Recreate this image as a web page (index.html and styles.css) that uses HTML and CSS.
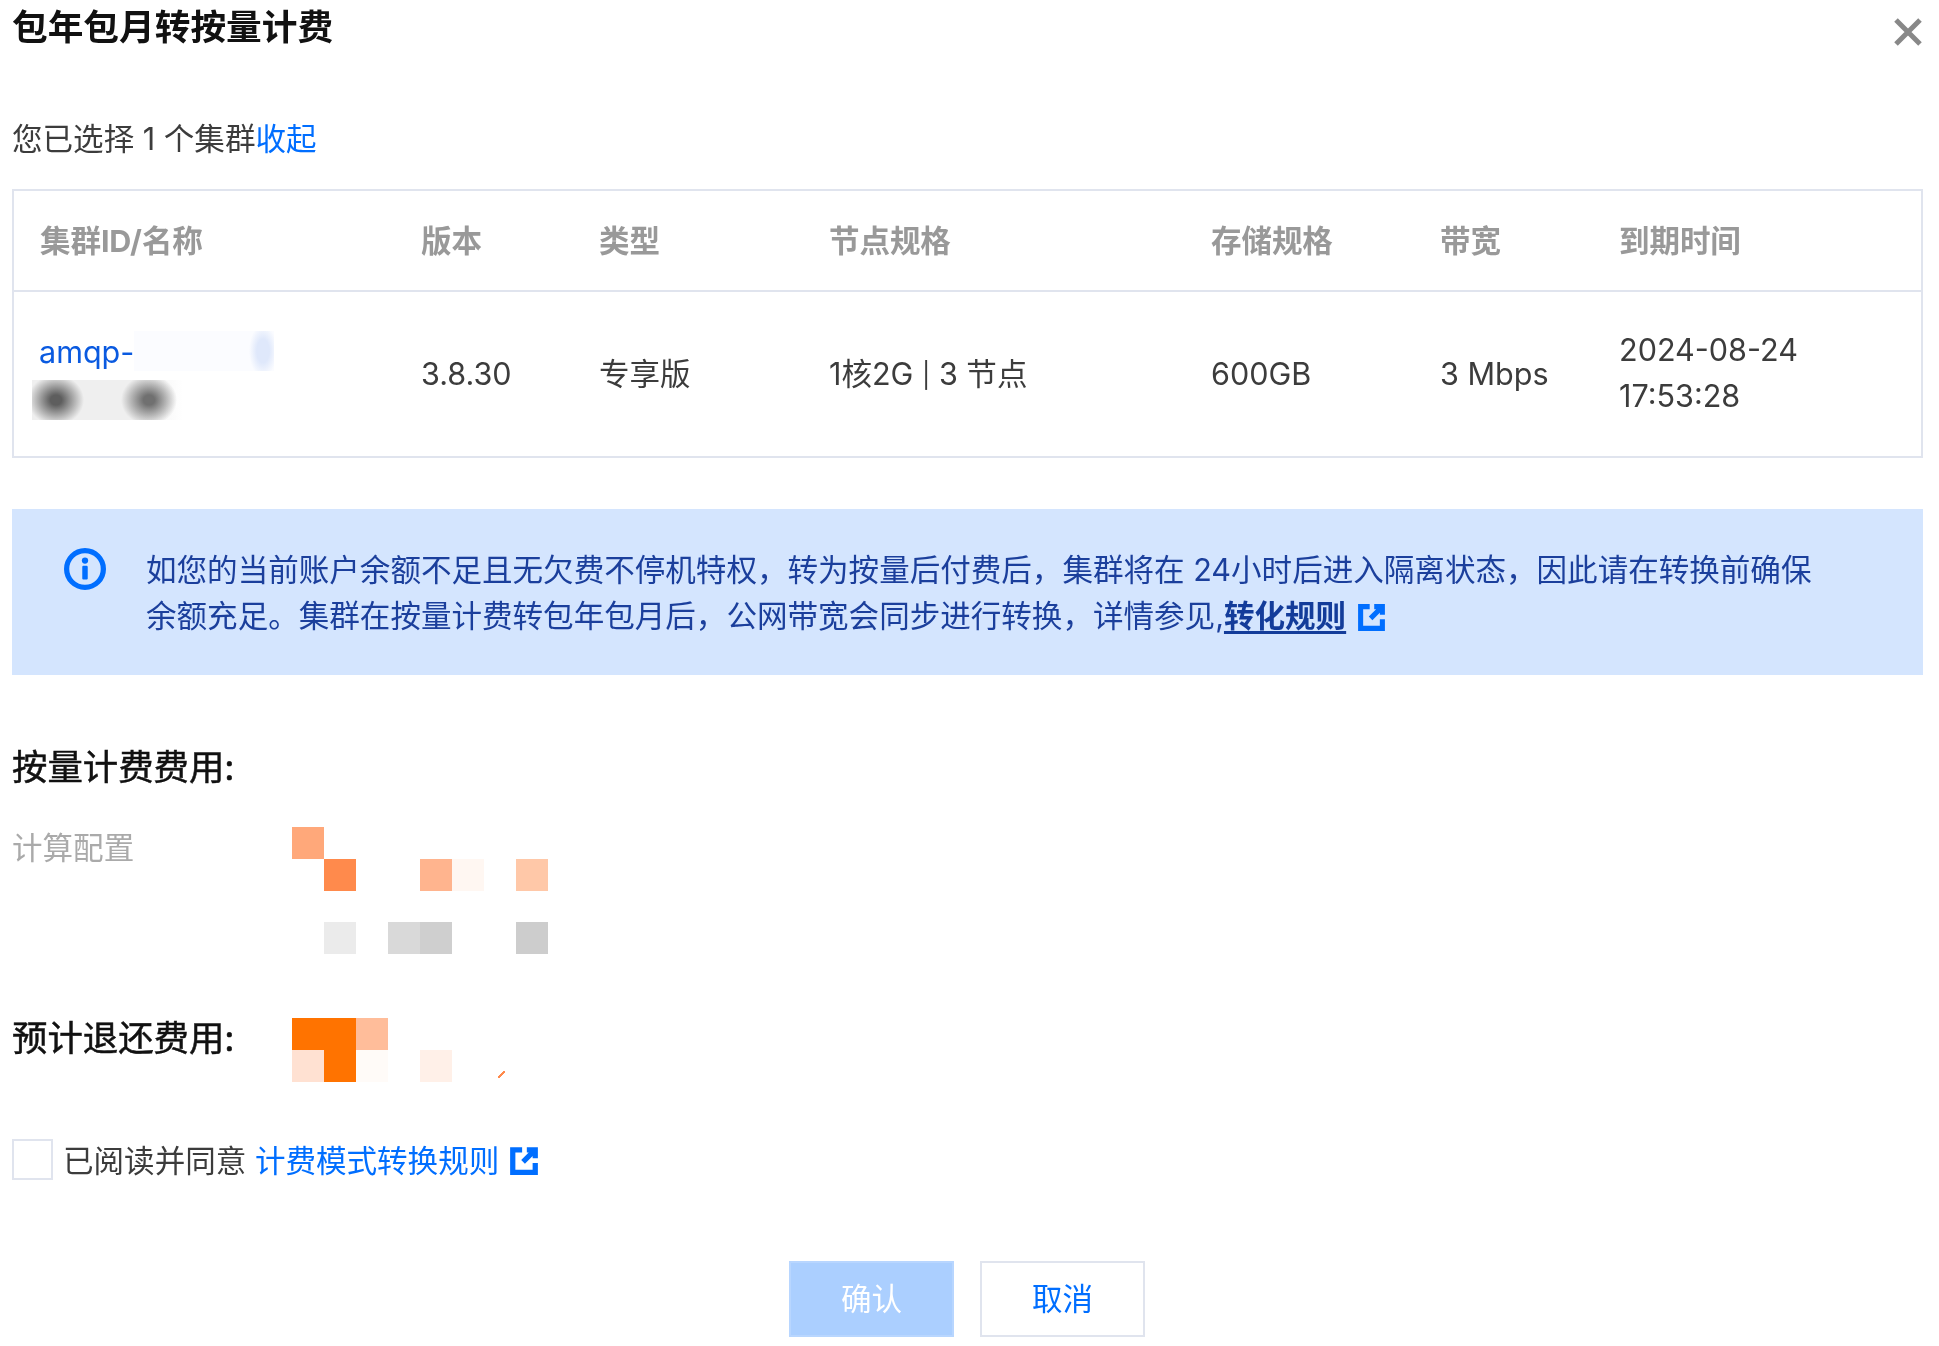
FILE: index.html
```html
<!DOCTYPE html>
<html lang="zh-CN">
<head>
<meta charset="utf-8">
<title>包年包月转按量计费</title>
<link rel="stylesheet" href="styles.css">
</head>
<body>
<main class="dialog">
  <header class="head">
    <h1 class="title">包年包月转按量计费</h1>
    <svg class="close" viewBox="0 0 30 30" aria-hidden="true"><path d="M3 3L27 27M27 3L3 27"/></svg>
  </header>
  <p class="selected">您已选择 1 个集群<a class="link">收起</a></p>
  <table class="clusters">
    <colgroup>
      <col class="c1"><col class="c2"><col class="c3"><col class="c4"><col class="c5"><col class="c6"><col>
    </colgroup>
    <thead>
      <tr><th><span class="th-text">集群ID/名称</span></th><th><span class="th-text">版本</span></th><th><span class="th-text">类型</span></th><th><span class="th-text">节点规格</span></th><th><span class="th-text">存储规格</span></th><th><span class="th-text">带宽</span></th><th><span class="th-text">到期时间</span></th></tr>
    </thead>
    <tbody>
      <tr>
        <td>
          <div class="idline"><a class="idlink">amqp-</a><span class="mask-blue"></span></div>
          <div class="mask-gray"></div>
        </td>
        <td>3.8.30</td>
        <td>专享版</td>
        <td>1核2G <span class="pipe">|</span> 3 节点</td>
        <td>600GB</td>
        <td>3 Mbps</td>
        <td><div class="date">2024-08-24<br>17:53:28</div></td>
      </tr>
    </tbody>
  </table>
  <section class="notice">
    <svg class="info" viewBox="0 0 40 40" aria-hidden="true">
      <circle class="info-ring" cx="20" cy="20" r="17.5"/>
      <circle class="info-dot" cx="20" cy="12" r="3"/>
      <rect class="info-dot" x="17.4" y="17" width="5.2" height="13" rx="1"/>
    </svg>
    <p class="notice-text">如您的当前账户余额不足且无欠费不停机特权，转为按量后付费后，集群将在 24小时后进入隔离状态，因此请在转换前确保余额充足。集群在按量计费转包年包月后，公网带宽会同步进行转换，详情参见,<a class="rule">转化规则</a><svg class="ext ext-notice" viewBox="0 0 16 16" aria-hidden="true"><path d="M7 2H2V14H14V9M9.5 2H14V6.5M13.5 2.5L7.5 8.5"/></svg></p>
  </section>
  <h2 class="fee-title">按量计费费用:</h2>
  <div class="fee-row">
    <span class="fee-label">计算配置</span>
    <div class="mosaic mosaic-config">
      <i class="m a1"></i><i></i><i></i><i></i><i></i><i></i><i></i><i></i>
      <i></i><i class="m a2"></i><i></i><i></i><i class="m a3"></i><i class="m a4"></i><i></i><i class="m a5"></i>
      <i></i><i></i><i></i><i></i><i></i><i></i><i></i><i></i>
      <i></i><i class="m g1"></i><i></i><i class="m g2"></i><i class="m g3"></i><i></i><i></i><i class="m g4"></i>
    </div>
  </div>
  <div class="refund-row">
    <h2 class="refund-label">预计退还费用:</h2>
    <div class="mosaic mosaic-refund">
      <i class="m b1"></i><i class="m b1"></i><i class="m b2"></i><i></i><i></i><i></i><i></i><i></i>
      <i class="m b3"></i><i class="m b1"></i><i class="m b4"></i><i></i><i class="m b5"></i><i></i><i class="tick"></i><i></i>
    </div>
  </div>
  <label class="agree">
    <span class="box"></span>
    <span class="agree-text">已阅读并同意 <a class="link">计费模式转换规则</a></span>
    <svg class="ext ext-agree" viewBox="0 0 16 16" aria-hidden="true"><path d="M7 2H2V14H14V9M9.5 2H14V6.5M13.5 2.5L7.5 8.5"/></svg>
  </label>
  <footer class="actions">
    <button class="btn btn-ok" type="button">确认</button>
    <button class="btn btn-cancel" type="button">取消</button>
  </footer>
</main>
</body>
</html>
```
FILE: styles.css
```css
* { box-sizing: border-box; }
html, body { margin: 0; padding: 0; background: #fff; }
body {
  width: 1939px;
  height: 1346px;
  overflow: hidden;
  font-family: Inter, "Noto Sans CJK SC", "Noto Sans", sans-serif;
  font-size: 30.56px;
  color: #3c3c3c;
}
.dialog { padding: 0 16px 0 12px; filter: blur(0.45px); }
.head { display: flex; justify-content: space-between; align-items: flex-start; height: 54px; }
.title { margin: 0; font-size: 35.7px; line-height: 54px; font-weight: 700; color: #111; }
.close { width: 30px; height: 30px; margin: 17px 0 0 0; flex: none; }
.close path { fill: none; stroke: #888; stroke-width: 5; }
.selected { margin: 62px 0 0; line-height: 46px; height: 46px; }
.link { color: #006eff; }
.clusters {
  margin-top: 27px;
  width: 100%;
  table-layout: fixed;
  border-collapse: collapse;
  border: 2px solid #e0e4ee;
}
.c1 { width: 382px; }
.c2 { width: 178px; }
.c3 { width: 230px; }
.c4 { width: 382px; }
.c5 { width: 229px; }
.c6 { width: 179px; }
.clusters th {
  height: 101px;
  padding: 0 0 3px 26px;
  text-align: left;
  font-weight: 700;
  color: #999;
  border-bottom: 2px solid #e0e4ee;
}
.th-text { letter-spacing: -0.1px; }
.clusters td { height: 166px; padding: 0 0 0 26px; line-height: 46px; }
.pipe { font-size: 25px; vertical-align: 1px; }
.date { margin-top: -2px; }
.idline { display: flex; align-items: center; height: 46px; margin: 0 0 0 -1px; }
.idlink { color: #0a5ae0; }
.mask-blue {
  width: 140px;
  height: 40px;
  margin-top: -2px;
  background: radial-gradient(ellipse 14px 26px at 129px 50%, #dfe8fb 45%, #fbfcff 100%);
}
.mask-gray {
  width: 151px;
  height: 40px;
  margin: 5px 0 0 -8px;
  background:
    radial-gradient(ellipse 28px 25px at 24px 50%, #5e5e5e 20%, rgba(102,102,102,0) 100%),
    radial-gradient(ellipse 28px 25px at 117px 50%, #707070 20%, rgba(119,119,119,0) 100%),
    linear-gradient(90deg, #efefef 70%, #fff);
}
.notice {
  display: flex;
  margin-top: 51px;
  height: 166px;
  background: #d4e5fe;
  padding: 38px 0 0 52px;
}
.info { width: 42px; height: 42px; flex: none; margin-right: 40px; margin-top: 1px; }
.info-ring { fill: none; stroke: #006eff; stroke-width: 5; }
.info-dot { fill: #006eff; }
.notice-text { margin: 0; width: 1680px; line-height: 46px; color: #1b3f9c; }
.rule { font-weight: 700; color: #133c9a; text-decoration: underline; text-underline-offset: 4px; }
.ext { fill: none; stroke: #006eff; stroke-width: 2.8; }
.ext-notice { width: 29px; height: 29px; margin-left: 11px; vertical-align: -5px; }
.fee-title { margin: 70px 0 0; font-size: 35.4px; line-height: 46px; font-weight: 400; color: #111; -webkit-text-stroke: 0.5px #111; }
.fee-row { display: flex; align-items: flex-start; margin-top: 34px; }
.fee-label { width: 280px; line-height: 46px; color: #aaa; flex: none; }
.mosaic { display: grid; grid-template-columns: repeat(8, 32px); margin-top: 2px; }
.mosaic-config { grid-template-rows: 32px 32px 31px 32px; }
.mosaic-refund { grid-template-rows: 32px 32px; }
.a1 { background: #ffa87a; }
.a2 { background: #ff8a4c; }
.a3 { background: #ffb48e; }
.a4 { background: #fff7f2; }
.a5 { background: #ffc8a8; }
.g1 { background: #ebebeb; }
.g2 { background: #d9d9d9; }
.g3 { background: #cfcfcf; }
.g4 { background: #cdcdcd; }
.b1 { background: #ff7300; }
.b2 { background: #ffbd9a; }
.b3 { background: #ffe1d2; }
.b4 { background: #fffbf8; }
.b5 { background: #fff0e8; }
.tick {
  background: linear-gradient(135deg, transparent 40%, #ff8a4c 40%, #ff8a4c 60%, transparent 60%) no-repeat 14px 21px / 7px 7px;
}
.refund-row { display: flex; align-items: flex-start; margin-top: 62px; }
.refund-label { margin: 0; width: 280px; flex: none; font-size: 35.4px; line-height: 46px; font-weight: 400; color: #111; -webkit-text-stroke: 0.5px #111; }
.agree { display: flex; align-items: center; margin-top: 57px; height: 41px; }
.box { width: 41px; height: 41px; border: 2px solid #e0e4ee; background: #fff; margin-right: 10px; flex: none; }
.agree-text { line-height: 46px; padding-top: 2px; }
.ext-agree { width: 30px; height: 30px; margin-left: 10px; margin-top: 2px; }
.actions { display: flex; justify-content: center; gap: 26px; margin-top: 81px; padding-right: 1px; }
.btn { width: 165px; height: 76px; font: inherit; padding: 0 0 5px; }
.btn-ok { background: #abcfff; border: 2px solid #b8d6ff; color: #fff; }
.btn-cancel { background: #fff; border: 2px solid #e0e4ee; color: #006eff; }
```
